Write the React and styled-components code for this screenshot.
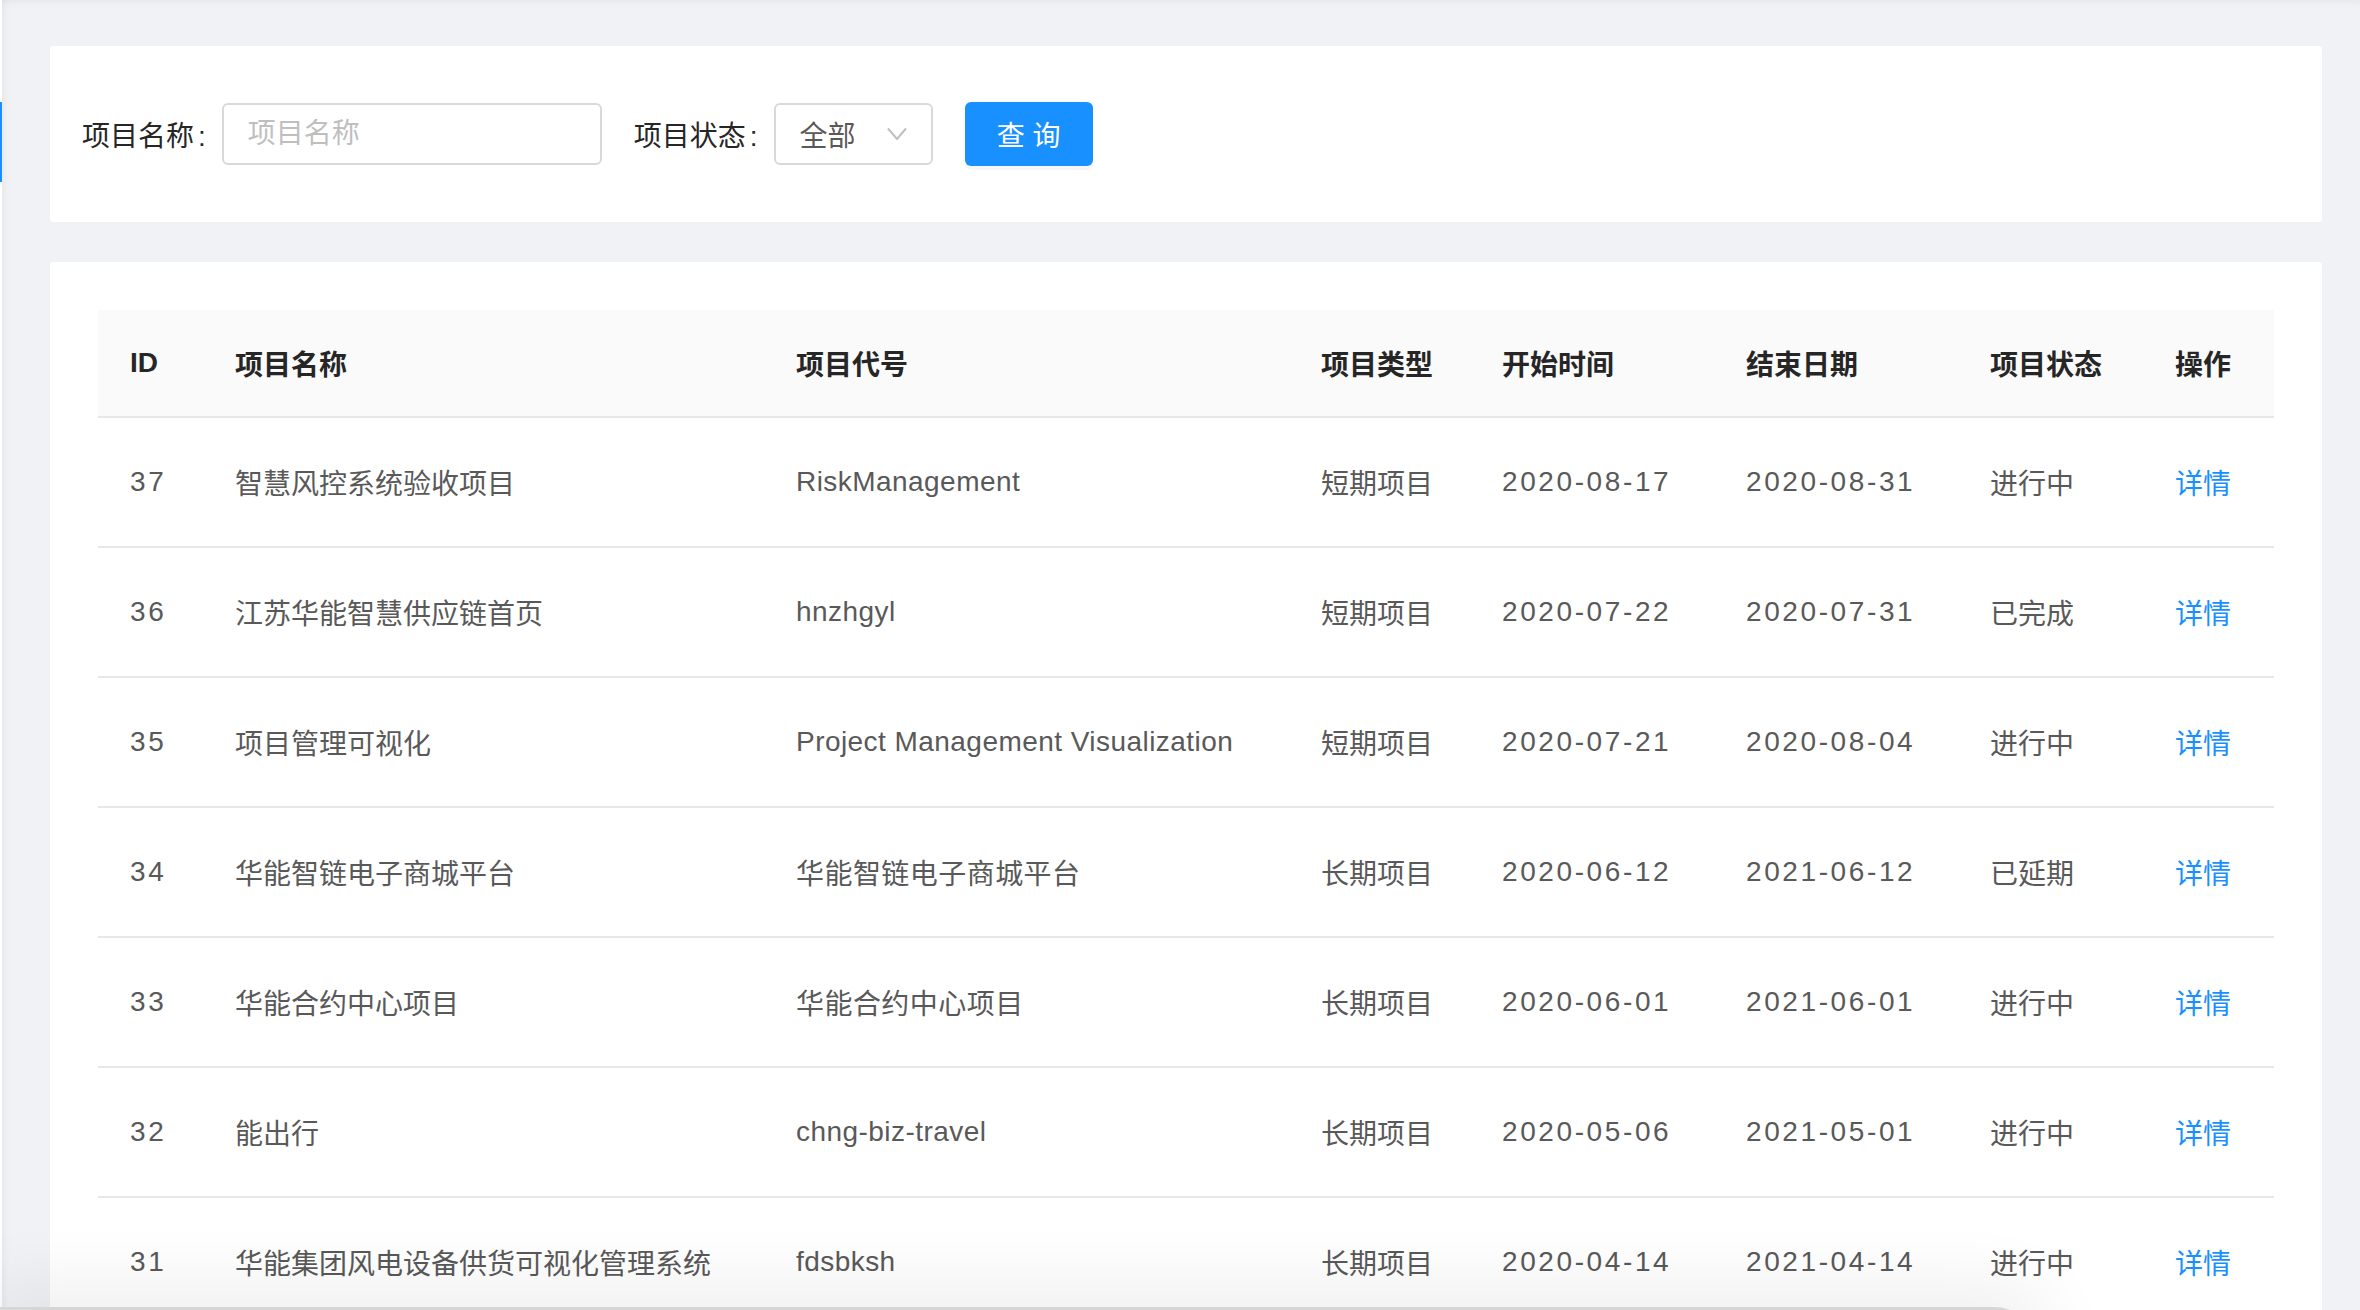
import React, { useState } from "react"
import styled, { createGlobalStyle } from "styled-components"

const GlobalStyle = createGlobalStyle`
  * {
    box-sizing: border-box;
  }
  html, body {
    margin: 0;
    padding: 0;
    background: #f0f2f5;
    font-family: "Liberation Sans", "Noto Sans CJK SC", sans-serif;
    overflow: hidden;
  }
`

const projects = [
  { id: 37, name: "智慧风控系统验收项目", code: "RiskManagement", type: "短期项目", start: "2020-08-17", end: "2020-08-31", status: "进行中" },
  { id: 36, name: "江苏华能智慧供应链首页", code: "hnzhgyl", type: "短期项目", start: "2020-07-22", end: "2020-07-31", status: "已完成" },
  { id: 35, name: "项目管理可视化", code: "Project Management Visualization", type: "短期项目", start: "2020-07-21", end: "2020-08-04", status: "进行中" },
  { id: 34, name: "华能智链电子商城平台", code: "华能智链电子商城平台", type: "长期项目", start: "2020-06-12", end: "2021-06-12", status: "已延期" },
  { id: 33, name: "华能合约中心项目", code: "华能合约中心项目", type: "长期项目", start: "2020-06-01", end: "2021-06-01", status: "进行中" },
  { id: 32, name: "能出行", code: "chng-biz-travel", type: "长期项目", start: "2020-05-06", end: "2021-05-01", status: "进行中" },
  { id: 31, name: "华能集团风电设备供货可视化管理系统", code: "fdsbksh", type: "长期项目", start: "2020-04-14", end: "2021-04-14", status: "进行中" },
]

const columns = [
  { title: "ID", width: 105 },
  { title: "项目名称", width: 561 },
  { title: "项目代号", width: 525 },
  { title: "项目类型", width: 181 },
  { title: "开始时间", width: 244 },
  { title: "结束日期", width: 244 },
  { title: "项目状态", width: 185 },
  { title: "操作", width: 131 },
]

const ChevronDown = () => (
  <svg width="20" height="14" viewBox="0 0 20 14" fill="none">
    <polyline points="1,1.5 10,12 19,1.5" stroke="#bfbfbf" strokeWidth="2" />
  </svg>
)

const App = () => {
  const [name, setName] = useState("")

  return (
    <Page>
      <GlobalStyle />
      <SideEdge>
        <ActiveMark />
      </SideEdge>
      <Content>
        <FilterCard>
          <FormItem>
            <Label>项目名称<Colon>:</Colon></Label>
            <Input
              type="text"
              placeholder="项目名称"
              value={name}
              onChange={e => setName(e.target.value)}
            />
          </FormItem>
          <FormItem>
            <Label>项目状态<Colon>:</Colon></Label>
            <Select>
              <span>全部</span>
              <ChevronDown />
            </Select>
          </FormItem>
          <SearchButton type="button">查 询</SearchButton>
        </FilterCard>

        <TableCard>
          <Table>
            <colgroup>
              {columns.map(col => (
                <col key={col.title} style={{ width: col.width }} />
              ))}
            </colgroup>
            <thead>
              <tr>
                {columns.map(col => (
                  <Th key={col.title}>{col.title}</Th>
                ))}
              </tr>
            </thead>
            <tbody>
              {projects.map(p => (
                <tr key={p.id}>
                  <Td $num>{p.id}</Td>
                  <Td>{p.name}</Td>
                  <Td $latin>{p.code}</Td>
                  <Td>{p.type}</Td>
                  <Td $num>{p.start}</Td>
                  <Td $num>{p.end}</Td>
                  <Td>{p.status}</Td>
                  <Td>
                    <DetailLink href="#">详情</DetailLink>
                  </Td>
                </tr>
              ))}
            </tbody>
          </Table>
        </TableCard>
      </Content>
      <BottomShade />
    </Page>
  )
}

const Page = styled.div`
  display: flex;
  height: 100vh;
  overflow: hidden;
  background: #f0f2f5;
`

const SideEdge = styled.div`
  width: 2px;
  flex-shrink: 0;
  background: #ffffff;
  padding-top: 102px;
`

const ActiveMark = styled.div`
  height: 80px;
  background: #1890ff;
`

const Content = styled.main`
  flex: 1;
  min-width: 0;
  display: flex;
  flex-direction: column;
  gap: 40px;
  padding: 46px 38px 0 48px;
  box-shadow: inset 8px 0 8px -6px rgba(0, 0, 0, 0.05),
    inset 0 8px 8px -6px rgba(0, 0, 0, 0.05);
`

const FilterCard = styled.section`
  height: 176px;
  flex-shrink: 0;
  display: flex;
  align-items: center;
  gap: 32px;
  padding: 0 32px;
  background: #ffffff;
  border-radius: 4px;
`

const FormItem = styled.div`
  display: flex;
  align-items: center;
`

const Label = styled.label`
  font-size: 28px;
  color: #262626;
  white-space: nowrap;
  margin-right: 16px;
`

const Colon = styled.span`
  margin-left: 4px;
`

const Input = styled.input`
  width: 380px;
  height: 62px;
  padding: 0 24px;
  border: 2px solid #d9d9d9;
  border-radius: 6px;
  font-family: inherit;
  font-size: 28px;
  color: #595959;
  outline: none;

  &::placeholder {
    color: #bfbfbf;
  }
`

const Select = styled.div`
  width: 159px;
  height: 62px;
  display: flex;
  align-items: center;
  justify-content: space-between;
  padding: 0 24px;
  border: 2px solid #d9d9d9;
  border-radius: 6px;
  font-size: 28px;
  color: #595959;
  cursor: pointer;
`

const SearchButton = styled.button`
  width: 128px;
  height: 64px;
  border: none;
  border-radius: 6px;
  background: #1890ff;
  color: #ffffff;
  font-family: inherit;
  font-size: 28px;
  box-shadow: 0 4px 0 rgba(0, 0, 0, 0.035);
  cursor: pointer;
`

const TableCard = styled.section`
  flex: 1;
  padding: 48px 48px 0;
  background: #ffffff;
  border-radius: 4px 4px 0 0;
`

const Table = styled.table`
  width: 100%;
  table-layout: fixed;
  border-collapse: separate;
  border-spacing: 0;
  font-size: 28px;
`

const Th = styled.th`
  height: 108px;
  padding: 0 0 0 32px;
  text-align: left;
  font-weight: 600;
  color: #262626;
  background: #fafafa;
  border-bottom: 2px solid #e8e8e8;
  white-space: nowrap;
`

const Td = styled.td`
  height: 130px;
  padding: 0 0 0 32px;
  color: #595959;
  border-bottom: 2px solid #e8e8e8;
  white-space: nowrap;
  letter-spacing: ${p => (p.$num ? "2.6px" : p.$latin ? "0.45px" : "0")};
`

const DetailLink = styled.a`
  color: #1890ff;
  text-decoration: none;
`

const BottomShade = styled.div`
  position: fixed;
  left: 0;
  top: 1307px;
  width: 2035px;
  height: 40px;
  background: #d6d6d6;
  border-top-right-radius: 40px;
  box-shadow: 0 -6px 70px 16px rgba(0, 0, 0, 0.07);
  pointer-events: none;
`

export default App
